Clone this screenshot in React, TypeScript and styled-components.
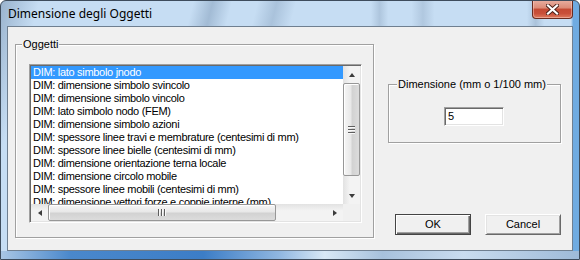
import React from "react";
import styled, { createGlobalStyle } from "styled-components";

const GlobalStyle = createGlobalStyle`
  html, body {
    margin: 0;
    padding: 0;
    background: #ffffff;
  }
  body {
    width: 580px;
    height: 260px;
    overflow: hidden;
  }
`;

const items = [
  "DIM: lato simbolo jnodo",
  "DIM: dimensione simbolo svincolo",
  "DIM: dimensione simbolo vincolo",
  "DIM: lato simbolo nodo (FEM)",
  "DIM: dimensione simbolo azioni",
  "DIM: spessore linee travi e membrature (centesimi di mm)",
  "DIM: spessore linee bielle (centesimi di mm)",
  "DIM: dimensione orientazione terna locale",
  "DIM: dimensione circolo mobile",
  "DIM: spessore linee mobili (centesimi di mm)",
  "DIM: dimensione vettori forze e coppie interne (mm)",
];

const uiFont = `"Liberation Sans", Arial, sans-serif`;

const Window = styled.div`
  width: 580px;
  height: 260px;
  box-sizing: border-box;
  border: 1px solid #3e4c5c;
  border-radius: 6px 6px 0 0;
  display: flex;
  flex-direction: column;
  overflow: hidden;
  background:
    linear-gradient(90deg, transparent 0 98.6%, rgba(40, 130, 210, 0.55) 99%),
    linear-gradient(
      104deg,
      rgba(70, 100, 135, 0.35) 0%,
      transparent 6%,
      transparent 30%,
      rgba(70, 100, 135, 0.28) 33%,
      transparent 36%,
      transparent 40%,
      rgba(70, 100, 135, 0.22) 43%,
      transparent 46%
    ),
    linear-gradient(
      90deg,
      transparent 0 64%,
      rgba(90, 115, 145, 0.22) 65.5%,
      transparent 67%,
      transparent 71%,
      rgba(90, 115, 145, 0.2) 73%,
      transparent 75%,
      transparent 91%,
      rgba(90, 115, 145, 0.25) 92.5%,
      transparent 94%
    ),
    #c6ddf3;
`;

const TitleBar = styled.div`
  height: 25px;
  display: flex;
  align-items: flex-start;
  flex-shrink: 0;
`;

const Title = styled.div`
  padding: 5px 0 0 7px;
  font-family: "Noto Sans", "Open Sans", sans-serif;
  font-size: 12px;
  line-height: 16px;
  color: #000;
`;

const CloseButton = styled.div`
  margin-left: auto;
  margin-right: 6px;
  margin-top: -1px;
  width: 41px;
  height: 19px;
  box-sizing: border-box;
  border: 1px solid #6a2c20;
  border-top: none;
  border-radius: 0 0 4px 4px;
  background: linear-gradient(
    to bottom,
    #e9b0a2 0%,
    #dc8a76 45%,
    #c44a33 50%,
    #c9503a 75%,
    #de7a5e 100%
  );
  box-shadow: inset 0 0 0 1px rgba(255, 220, 210, 0.45);
  display: flex;
  align-items: center;
  justify-content: center;
`;

const ClientArea = styled.div`
  margin: 0 6px;
  height: 225px;
  box-sizing: border-box;
  border: 1px solid #6f7f90;
  background: #f0f0f0;
  display: flex;
  padding: 17px 0 0 7px;
  font-family: ${uiFont};
  font-size: 11px;
  color: #000;
`;

const FrameBottom = styled.div`
  flex: 1;
  background: linear-gradient(
    90deg,
    #a9c6e4 0%,
    #4a88cc 12%,
    #3c7dc6 35%,
    #8fb6e0 48%,
    #d8e8f6 56%,
    #a7c1dc 66%,
    #c9dcef 80%,
    #9ebad8 100%
  );
`;

const GroupBox = styled.div<{ $w: number; $h: number }>`
  position: relative;
  width: ${(p) => p.$w}px;
  height: ${(p) => p.$h}px;
  box-sizing: border-box;
  border: 1px solid #a0a0a0;
  box-shadow: 1px 1px 0 #ffffff, inset 1px 1px 0 #ffffff;
`;

const Caption = styled.div<{ $left: number }>`
  position: absolute;
  top: -7px;
  left: ${(p) => p.$left}px;
  padding: 0 1px;
  background: #f0f0f0;
  line-height: 13px;
  white-space: nowrap;
`;

const ObjectsBody = styled.div`
  padding: 19px 0 0 13px;
`;

const ListBox = styled.div`
  width: 333px;
  height: 159px;
  box-sizing: border-box;
  border: 1px solid;
  border-color: #a0a0a0 #ffffff #ffffff #a0a0a0;
  padding: 1px;
  box-shadow: inset 1px 1px 0 #696969, inset -1px -1px 0 #e3e3e3;
  display: grid;
  grid-template-columns: 1fr 17px;
  grid-template-rows: 1fr 17px;
  background: #ffffff;
`;

const Rows = styled.div`
  overflow: hidden;
`;

const Row = styled.div<{ $selected?: boolean }>`
  height: 13px;
  line-height: 13px;
  padding-left: 2px;
  white-space: nowrap;
  letter-spacing: -0.3px;
  background: ${(p) => (p.$selected ? "#3399ff" : "transparent")};
  color: ${(p) => (p.$selected ? "#ffffff" : "#000000")};
`;

const VScroll = styled.div`
  display: flex;
  flex-direction: column;
  background: linear-gradient(90deg, #e2e2e2, #f3f3f3 40%, #f3f3f3);
`;

const HScroll = styled.div`
  display: flex;
  background: linear-gradient(180deg, #e2e2e2, #f3f3f3 40%, #f3f3f3);
`;

const Corner = styled.div`
  background: #f0f0f0;
`;

const ArrowButton = styled.div`
  width: 17px;
  height: 17px;
  flex-shrink: 0;
  display: flex;
  align-items: center;
  justify-content: center;
`;

const Arrow = styled.div<{ $dir: "up" | "down" | "left" | "right" }>`
  width: 0;
  height: 0;
  border-style: solid;
  border-color: transparent;
  ${(p) =>
    p.$dir === "up"
      ? "border-width: 0 3.5px 4px 3.5px; border-bottom-color: #3c3c3c;"
      : p.$dir === "down"
        ? "border-width: 4px 3.5px 0 3.5px; border-top-color: #3c3c3c;"
        : p.$dir === "left"
          ? "border-width: 3.5px 4px 3.5px 0; border-right-color: #3c3c3c;"
          : "border-width: 3.5px 0 3.5px 4px; border-left-color: #3c3c3c;"}
`;

const Track = styled.div<{ $vertical?: boolean }>`
  flex: 1;
  display: flex;
  flex-direction: ${(p) => (p.$vertical ? "column" : "row")};
`;

const Thumb = styled.div<{ $vertical?: boolean; $size: number }>`
  box-sizing: border-box;
  ${(p) =>
    p.$vertical
      ? `height: ${p.$size}px; width: 17px; flex-direction: column;`
      : `width: ${p.$size}px; height: 17px; flex-direction: row;`}
  border: 1px solid #979797;
  border-radius: 2px;
  background: ${(p) =>
    p.$vertical
      ? "linear-gradient(90deg, #f6f6f6, #e8e8e8 45%, #d2d2d2 55%, #dcdcdc)"
      : "linear-gradient(180deg, #f6f6f6, #e8e8e8 45%, #d2d2d2 55%, #dcdcdc)"};
  box-shadow: inset 1px 1px 0 #ffffff;
  display: flex;
  align-items: center;
  justify-content: center;
  gap: 1px;
`;

const Grip = styled.div<{ $vertical?: boolean }>`
  ${(p) =>
    p.$vertical
      ? "width: 7px; height: 1px; border-bottom: 1px solid #f8f8f8;"
      : "width: 1px; height: 7px; border-right: 1px solid #f8f8f8;"}
  background: #5e5e5e;
`;

const RightColumn = styled.div`
  margin-left: 14px;
  width: 173px;
  height: 191px;
  display: flex;
  flex-direction: column;
  padding-top: 40px;
  box-sizing: border-box;
`;

const SizeBody = styled.div`
  display: flex;
  justify-content: center;
  padding: 22px 1px 0 0;
`;

const TextInput = styled.div`
  width: 60px;
  height: 19px;
  box-sizing: border-box;
  border: 1px solid;
  border-color: #a0a0a0 #ffffff #ffffff #a0a0a0;
  box-shadow: inset 1px 1px 0 #696969, inset -1px -1px 0 #e3e3e3;
  background: #ffffff;
  padding: 0 0 0 3px;
  line-height: 17px;
`;

const ButtonRow = styled.div`
  margin-top: auto;
  display: flex;
  justify-content: flex-end;
  gap: 14px;
`;

const Button = styled.div<{ $default?: boolean }>`
  width: 76px;
  height: 21px;
  box-sizing: border-box;
  display: flex;
  align-items: center;
  justify-content: center;
  background: #f0f0f0;
  line-height: 13px;
  ${(p) =>
    p.$default
      ? `border: 1px solid #444444;
         box-shadow: inset 1px 1px 0 #ffffff, inset -1px -1px 0 #696969, inset -2px -2px 0 #a0a0a0;`
      : `border: 1px solid;
         border-color: #ffffff #696969 #696969 #ffffff;
         box-shadow: inset 1px 1px 0 #e3e3e3, inset -1px -1px 0 #a0a0a0;`}
`;

const CloseGlyph = () => (
  <svg width="13" height="11" viewBox="0 0 13 11">
    <path d="M2 1.5 L11 9.5 M11 1.5 L2 9.5" stroke="#4a2018" strokeWidth="4" strokeLinecap="square" />
    <path d="M2 1.5 L11 9.5 M11 1.5 L2 9.5" stroke="#ffffff" strokeWidth="2.2" strokeLinecap="square" />
  </svg>
);

const GripLines = ({ vertical }: { vertical?: boolean }) => (
  <>
    <Grip $vertical={vertical} />
    <Grip $vertical={vertical} />
    <Grip $vertical={vertical} />
  </>
);

export default function App() {
  return (
    <>
      <GlobalStyle />
      <Window>
        <TitleBar>
          <Title>Dimensione degli Oggetti</Title>
          <CloseButton>
            <CloseGlyph />
          </CloseButton>
        </TitleBar>
        <ClientArea>
          <GroupBox $w={359} $h={194}>
            <Caption $left={6}>Oggetti</Caption>
            <ObjectsBody>
              <ListBox>
                <Rows>
                  {items.map((item, i) => (
                    <Row key={item} $selected={i === 0}>
                      {item}
                    </Row>
                  ))}
                </Rows>
                <VScroll>
                  <ArrowButton>
                    <Arrow $dir="up" />
                  </ArrowButton>
                  <Track $vertical>
                    <Thumb $vertical $size={93}>
                      <GripLines vertical />
                    </Thumb>
                  </Track>
                  <ArrowButton>
                    <Arrow $dir="down" />
                  </ArrowButton>
                </VScroll>
                <HScroll>
                  <ArrowButton>
                    <Arrow $dir="left" />
                  </ArrowButton>
                  <Track>
                    <Thumb $size={228}>
                      <GripLines />
                    </Thumb>
                  </Track>
                  <ArrowButton>
                    <Arrow $dir="right" />
                  </ArrowButton>
                </HScroll>
                <Corner />
              </ListBox>
            </ObjectsBody>
          </GroupBox>
          <RightColumn>
            <GroupBox $w={173} $h={59}>
              <Caption $left={8}>Dimensione (mm o 1/100 mm)</Caption>
              <SizeBody>
                <TextInput>5</TextInput>
              </SizeBody>
            </GroupBox>
            <ButtonRow>
              <Button $default>OK</Button>
              <Button>Cancel</Button>
            </ButtonRow>
          </RightColumn>
        </ClientArea>
        <FrameBottom />
      </Window>
    </>
  );
}
